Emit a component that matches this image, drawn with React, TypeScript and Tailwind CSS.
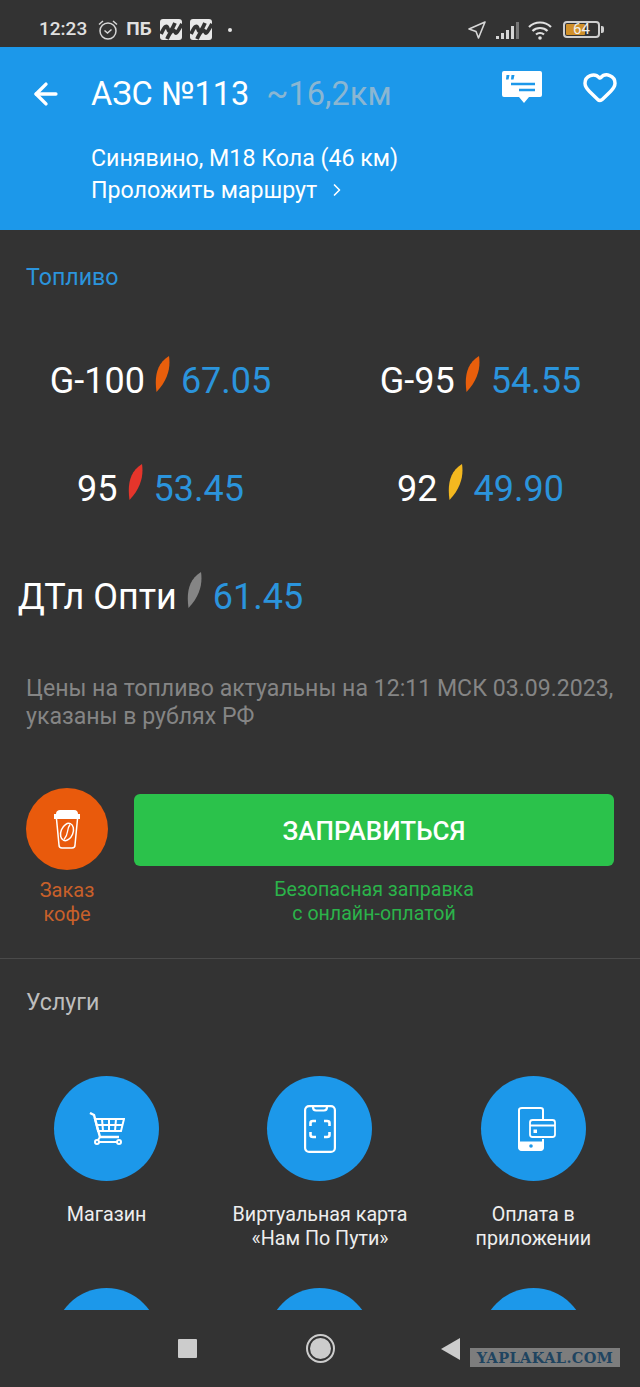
import { ArrowLeft, ChevronRight, Heart } from 'lucide-react'

const font = { fontFamily: 'Roboto, "Liberation Sans", sans-serif' }

type Fuel = { name: string; price: string; leaf: string }

const fuels: Fuel[] = [
  { name: 'G-100', price: '67.05', leaf: '#e95f0c' },
  { name: 'G-95', price: '54.55', leaf: '#e95f0c' },
  { name: '95', price: '53.45', leaf: '#e5352b' },
  { name: '92', price: '49.90', leaf: '#f4b81f' },
  { name: 'ДТл Опти', price: '61.45', leaf: '#858585' },
]

function Leaf({ color }: { color: string }) {
  return (
    <svg width="15" height="36" viewBox="0 0 15 36" className="mb-[14px] shrink-0">
      <path d="M14 0C15.500 10 14 23 1.500 36C-0.500 22 1 8 14 0Z" fill={color} />
    </svg>
  )
}

function FuelPrice({ fuel }: { fuel: Fuel }) {
  return (
    <div className="flex h-[108px] items-center justify-center gap-[11px] pt-[2px] text-[36px] leading-[44px]">
      <span className="translate-x-[1px] text-white">{fuel.name}</span>
      <Leaf color={fuel.leaf} />
      <span className="text-[#2b94dc]">{fuel.price}</span>
    </div>
  )
}

function AlarmIcon() {
  return (
    <svg width="22" height="22" viewBox="0 0 22 22" fill="none" stroke="#d6d6d6" strokeWidth="1.500">
      <circle cx="11" cy="12" r="8" />
      <path d="M7.500 11.500l3 2.500 4-3.500M2 5.500L6 2M20 5.500L16 2" />
    </svg>
  )
}

function WaveBadge() {
  return (
    <svg width="22" height="22" viewBox="0 0 22 22">
      <rect width="22" height="21" rx="3" fill="#e8e8e8" />
      <path d="M1 15C5 6 7 6 8 10S11 13 15 4M7 20C11 11 14 10 15 13S18 12 22 5" fill="none" stroke="#333" strokeWidth="3.800" />
    </svg>
  )
}

function ChatIcon() {
  return (
    <svg width="40" height="33" viewBox="0 0 40 33">
      <path d="M2 0H38A2 2 0 0 1 40 2V24A2 2 0 0 1 38 26H27L22 32L17 26H2A2 2 0 0 1 0 24V2A2 2 0 0 1 2 0Z" fill="#fff" />
      <path d="M4.500 4h3l-1 4.500H4zM9.500 4h3l-1 4.500H9z" fill="#1c98ea" />
      <path d="M9 13H33M17 19H33" stroke="#1c98ea" strokeWidth="2.400" />
    </svg>
  )
}

function CupIcon() {
  return (
    <svg width="28" height="40" viewBox="0 0 28 40" fill="none">
      <path d="M3 5C3 2 5 1 7 1H21C24 1 25 3 25 5H27V10H1V5Z" fill="#fff" />
      <path d="M3.500 10L6 36C6 38 7 39 9 39H19C21 39 22 38 22 36L24.500 10" stroke="#fff" strokeWidth="1.500" />
      <ellipse cx="14" cy="23" rx="6" ry="9" transform="rotate(22 14 23)" stroke="#fff" strokeWidth="1.500" />
      <path d="M17 15.500C13 21 16.500 24 11 30.500" stroke="#fff" strokeWidth="1.300" />
    </svg>
  )
}

function CartIcon() {
  return (
    <svg width="36" height="33" viewBox="0 0 36 33" fill="none" stroke="#fff" strokeWidth="2">
      <path d="M1 1L5 3L11 25H30" strokeWidth="2.400" />
      <path d="M6 7H35L32 19H9ZM13 7L14 19M20 7V19M27 7L26 19M7 13H33" />
      <path d="M11 25L9 28" />
      <circle cx="8" cy="30" r="2" />
      <circle cx="30" cy="30" r="2" />
      <path d="M10 30H28" />
    </svg>
  )
}

function ScanPhoneIcon() {
  return (
    <svg width="32" height="48" viewBox="0 0 32 48" fill="none" stroke="#fff" strokeWidth="2.200">
      <rect x="1.100" y="1.100" width="29.800" height="45.800" rx="4" />
      <path d="M9 2C9 4.500 10 5.500 12 5.500H20C22 5.500 23 4.500 23 2" />
      <path d="M6.500 21V18C6.500 16.500 7.500 16 9 16H12M20 16H23C24.500 16 25.500 16.500 25.500 18V21M6.500 27V30C6.500 31.500 7.500 32 9 32H12M20 32H23C24.500 32 25.500 31.500 25.500 30V27" strokeWidth="2.600" />
    </svg>
  )
}

function PayPhoneIcon() {
  return (
    <svg width="38" height="44" viewBox="0 0 38 44" fill="none" stroke="#fff" className="ml-[7px]">
      <path d="M25 13V3C25 2 24 1 22.500 1H4C2 1 1 2 1 3V40C1 42 2 43 4 43H22.500C24 43 25 42 25 40V32" strokeWidth="2" />
      <path d="M1 35H25V41C25 42 24 43 23 43H3C2 43 1 42 1 41Z" fill="#fff" strokeWidth="1" />
      <circle cx="13" cy="39" r="1.800" fill="#1c98ea" stroke="none" />
      <rect x="12" y="13" width="25" height="17" rx="2.500" strokeWidth="1.800" fill="#1c98ea" />
      <path d="M12 18.500H37" strokeWidth="2" />
      <rect x="15.500" y="22.500" width="3.500" height="3.500" fill="#fff" stroke="none" />
    </svg>
  )
}

function ServiceCircle({ children }: { children?: React.ReactNode }) {
  return (
    <div className="flex h-[105px] w-[105px] shrink-0 items-center justify-center rounded-full bg-[#1c98ea]">
      {children}
    </div>
  )
}

export default function App() {
  return (
    <div className="relative flex h-[1387px] w-[640px] flex-col overflow-hidden bg-[#333333]" style={font}>
      {/* status bar */}
      <div className="flex h-[47px] shrink-0 items-center pl-[39px] pr-[38px] pt-[12px]">
        <span className="text-[19px] font-medium text-[#e0e0e0]">12:23</span>
        <div className="ml-[10px] flex items-center">
          <AlarmIcon />
          <span className="ml-[7px] text-[19px] font-bold text-[#e0e0e0]">ПБ</span>
          <div className="ml-[8px]">
            <WaveBadge />
          </div>
          <div className="ml-[8px]">
            <WaveBadge />
          </div>
          <span className="ml-[16px] h-[4px] w-[4px] rounded-full bg-[#e6e6e6]" />
        </div>
        <div className="ml-auto mr-[2px] flex items-center gap-[9px]">
          <svg width="18" height="18" viewBox="0 0 18 18" fill="none" stroke="#d6d6d6" strokeWidth="1.600">
            <path d="M17 1L1 8L8 10.500L10.500 17Z" strokeLinejoin="round" />
          </svg>
          <svg width="24" height="18" viewBox="0 0 24 18">
            <path d="M1 18V15H4V18ZM6 18V12H9V18ZM11 18V9H14V18ZM16 18V5H19V18Z" fill="#d6d6d6" />
            <path d="M21 18V1H24V18Z" fill="#777" />
          </svg>
          <svg width="25" height="20" viewBox="0 0 25 20" fill="none" stroke="#e0e0e0" strokeWidth="2.200">
            <path d="M1 7C7 1 17 1 23 7M4.500 11C8.500 7 15.500 7 19.500 11M8 14.500C10 12.500 14 12.500 16 14.500" />
            <circle cx="12" cy="18" r="1.800" fill="#e0e0e0" stroke="none" />
          </svg>
          <div className="relative ml-[1px] flex h-[17px] w-[37px] items-center rounded-[4px] border-2 border-[#cfcfcf] p-[1px]">
            <div className="h-full w-[60%] rounded-[1px] bg-[#d0902a]" />
            <span className="absolute inset-0 text-center text-[15px] leading-[13px] text-[#eeeeee]">64</span>
            <span className="absolute -right-[6px] top-[3px] h-[7px] w-[3px] rounded-r-[2px] bg-[#cfcfcf]" />
          </div>
        </div>
      </div>

      {/* station header */}
      <header className="flex h-[183px] shrink-0 flex-col bg-[#1c98ea] pl-[29px] pr-[22px] text-white">
        <div className="mt-[24px] flex h-[46px] items-center">
          <ArrowLeft size={34} strokeWidth={2.400} />
          <span className="ml-[28px] text-[32.600px]">АЗС №113</span>
          <span className="ml-[17px] text-[32.600px] text-[#8ab6d2]">~16,2км</span>
          <div className="ml-auto mb-[14px] flex items-center gap-[40px]">
            <ChatIcon />
            <Heart size={36} strokeWidth={2.300} />
          </div>
        </div>
        <div className="ml-[62px] mt-[25px] text-[23.200px] leading-[32px]">
          <div>Синявино, М18 Кола (46 км)</div>
          <div className="flex items-center gap-[10px]">
            Проложить маршрут
            <ChevronRight size={20} strokeWidth={2} />
          </div>
        </div>
      </header>

      <main className="min-h-0 flex-1 overflow-hidden">
        <div className="px-[26px] pt-[34px] text-[23.200px] leading-[26px] text-[#2b94dc]">Топливо</div>

        <div className="mt-[36px] grid grid-cols-2">
          {fuels.map((f) => (
            <FuelPrice key={f.name} fuel={f} />
          ))}
        </div>

        <p className="mt-[25px] whitespace-nowrap px-[26px] text-[23.100px] leading-[28px] text-[#858585]">
          Цены на топливо актуальны на 12:11 МСК 03.09.2023,
          <br />
          указаны в рублях РФ
        </p>

        <div className="mt-[57px] flex gap-[26px] px-[26px]">
          <div className="flex w-[82px] flex-col items-center">
            <div className="flex h-[82px] w-[82px] items-center justify-center rounded-full bg-[#e95a0c]">
              <CupIcon />
            </div>
            <div className="mt-[8px] text-center text-[20px] leading-[24px] text-[#c8602a]">
              Заказ
              <br />
              кофе
            </div>
          </div>
          <div className="flex flex-1 flex-col items-center pt-[6px]">
            <button className="h-[72px] w-full rounded-[6px] bg-[#2bc24b] pt-[2px] text-[26px] font-medium text-white">
              ЗАПРАВИТЬСЯ
            </button>
            <div className="mt-[12px] text-center text-[19.600px] leading-[24px] text-[#2bb34a]">
              Безопасная заправка
              <br />с онлайн-оплатой
            </div>
          </div>
        </div>

        <div className="mt-[32px] border-t border-[#4a4a4a] px-[26px] pt-[30px] text-[23.200px] leading-[26px] text-[#bdbdbd]">
          Услуги
        </div>

        <div className="mt-[61px] grid grid-cols-3 gap-y-[38px] text-center text-[19.700px] leading-[24px] text-[#eeeeee]">
          <div className="flex flex-col items-center gap-[22px]">
            <ServiceCircle>
              <CartIcon />
            </ServiceCircle>
            <div className="h-[47px]">Магазин</div>
          </div>
          <div className="flex flex-col items-center gap-[22px]">
            <ServiceCircle>
              <ScanPhoneIcon />
            </ServiceCircle>
            <div className="h-[47px]">
              Виртуальная карта
              <br />
              «Нам По Пути»
            </div>
          </div>
          <div className="flex flex-col items-center gap-[22px]">
            <ServiceCircle>
              <PayPhoneIcon />
            </ServiceCircle>
            <div className="h-[47px]">
              Оплата в
              <br />
              приложении
            </div>
          </div>
          <div className="flex justify-center">
            <ServiceCircle />
          </div>
          <div className="flex justify-center">
            <ServiceCircle />
          </div>
          <div className="flex justify-center">
            <ServiceCircle />
          </div>
        </div>
      </main>

      {/* system navigation */}
      <nav className="relative z-10 flex h-[77px] shrink-0 items-center bg-[#333333] pl-[178px]">
        <div className="h-[19px] w-[19px] rounded-[1px] bg-[#cccccc]" />
        <div className="ml-[109px] flex h-[29px] w-[29px] items-center justify-center rounded-full border-2 border-[#cccccc]">
          <div className="h-[21px] w-[21px] rounded-full bg-[#cccccc]" />
        </div>
        <svg width="19" height="22" viewBox="0 0 19 22" className="ml-[106px]">
          <path d="M0 11L19 0V22Z" fill="#cccccc" />
        </svg>
      </nav>

      <div
        className="absolute left-[470px] top-[1348px] z-20 flex h-[19px] w-[150px] items-center justify-center bg-[#7d7d7d] text-[14.500px] font-bold tracking-[0.4px] text-[#1f4460]"
        style={{ fontFamily: '"DejaVu Serif", serif' }}
      >
        YAPLAKAL.COM
      </div>
    </div>
  )
}
